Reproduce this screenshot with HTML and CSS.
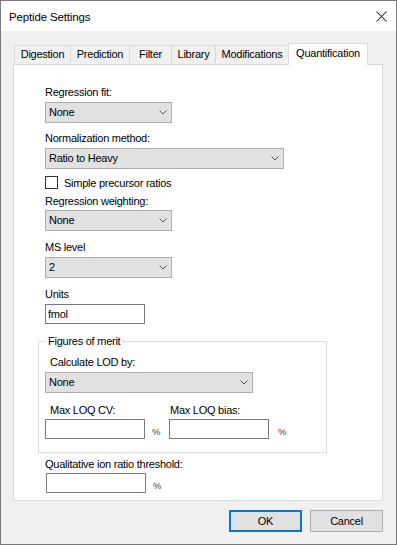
FILE: index.html
```html
<!DOCTYPE html>
<html>
<head>
<meta charset="utf-8">
<title>Peptide Settings</title>
<link rel="stylesheet" href="styles.css">
</head>
<body>
<div class="window">
  <div class="titlebar">
    <span class="title">Peptide Settings</span>
    <svg class="close" width="11" height="11" viewBox="0 0 11 11"><path d="M0.5 0.5 L10.5 10.5 M10.5 0.5 L0.5 10.5" stroke="#1a1a1a" stroke-width="1.05" fill="none"/></svg>
  </div>
  <div class="body">
    <div class="tabs">
      <div class="tab t-dig">Digestion</div>
      <div class="tab t-pred">Prediction</div>
      <div class="tab t-filt">Filter</div>
      <div class="tab t-lib">Library</div>
      <div class="tab t-mod">Modifications</div>
      <div class="tab active t-quant">Quantification</div>
    </div>
    <div class="panel">
      <div class="lbl">Regression fit:</div>
      <div class="combo w-sm mt2"><span>None</span><svg class="chev" width="8" height="5" viewBox="0 0 8 5"><polyline points="0.5,0.5 4,4 7.5,0.5" fill="none" stroke="#555" stroke-width="1"/></svg></div>

      <div class="lbl mt8">Normalization method:</div>
      <div class="combo w-lg mt2"><span>Ratio to Heavy</span><svg class="chev" width="8" height="5" viewBox="0 0 8 5"><polyline points="0.5,0.5 4,4 7.5,0.5" fill="none" stroke="#555" stroke-width="1"/></svg></div>

      <div class="check-row mt7"><span class="checkbox"></span><span>Simple precursor ratios</span></div>

      <div class="lbl mt5">Regression weighting:</div>
      <div class="combo w-sm mt1"><span>None</span><svg class="chev" width="8" height="5" viewBox="0 0 8 5"><polyline points="0.5,0.5 4,4 7.5,0.5" fill="none" stroke="#555" stroke-width="1"/></svg></div>

      <div class="lbl mt9">MS level</div>
      <div class="combo w-sm mt2"><span>2</span><svg class="chev" width="8" height="5" viewBox="0 0 8 5"><polyline points="0.5,0.5 4,4 7.5,0.5" fill="none" stroke="#555" stroke-width="1"/></svg></div>

      <div class="lbl mt9">Units</div>
      <div class="textbox mt2">fmol</div>

      <div class="group">
        <div class="legend">Figures of merit</div>
        <div class="lbl in mt6">Calculate LOD by:</div>
        <div class="combo w-md mt2"><span>None</span><svg class="chev" width="8" height="5" viewBox="0 0 8 5"><polyline points="0.5,0.5 4,4 7.5,0.5" fill="none" stroke="#555" stroke-width="1"/></svg></div>
        <div class="loq-row mt10">
          <div class="loq-col first">
            <div class="lbl in">Max LOQ CV:</div>
            <div class="input-row mt1"><div class="textbox"></div><span class="pct">%</span></div>
          </div>
          <div class="loq-col">
            <div class="lbl in1">Max LOQ bias:</div>
            <div class="input-row mt1"><div class="textbox"></div><span class="pct pct2">%</span></div>
          </div>
        </div>
      </div>

      <div class="lbl mt4">Qualitative ion ratio threshold:</div>
      <div class="input-row mt1 qual"><div class="textbox"></div><span class="pct">%</span></div>
    </div>
    <div class="buttons">
      <button class="btn default">OK</button>
      <button class="btn">Cancel</button>
    </div>
  </div>
</div>
</body>
</html>
```

FILE: styles.css
```css
* { box-sizing: border-box; }
html, body { margin: 0; padding: 0; background: #fff; }
body {
  font-family: "Liberation Sans", Arial, sans-serif;
  font-size: 11px;
  letter-spacing: -0.25px;
  color: #000;
}
.window {
  width: 397px;
  height: 545px;
  border: 1px solid #7a7a7a;
  background: #f0f0f0;
  display: flex;
  flex-direction: column;
}
.titlebar {
  height: 30px;
  flex: none;
  background: #fff;
  display: flex;
  align-items: center;
  justify-content: space-between;
  padding: 0 9px 0 8px;
}
.title { font-size: 11.5px; letter-spacing: -0.15px; padding-top: 1px; }
.close { display: block; margin-top: 1px; }

.body {
  flex: 1;
  display: flex;
  flex-direction: column;
  padding: 12px 13px 0 12px;
}
.tabs {
  display: flex;
  align-items: flex-end;
  height: 21px;
  padding-left: 1px;
}
.tab {
  height: 19px;
  line-height: 17px;
  border: 1px solid #d9d9d9;
  border-bottom: none;
  background: #f0f0f0;
  text-align: center;
  margin-left: -1px;
}
.tab:first-child { margin-left: 0; }
.tab.active {
  position: relative;
  z-index: 1;
  height: 22px;
  margin-bottom: -1px;
  background: #fff;
  line-height: 18px;
}
.t-dig { width: 57px; }
.t-pred { width: 60px; }
.t-filt { width: 43px; }
.t-lib { width: 45px; }
.t-mod { width: 74px; }
.t-quant { width: 80px; }

.panel {
  width: 370px;
  height: 437px;
  border: 1px solid #d9d9d9;
  background: #fff;
  padding: 20px 0 0 31px;
  display: flex;
  flex-direction: column;
  align-items: flex-start;
}
.lbl { height: 15px; line-height: 15px; white-space: nowrap; }
.lbl.in { margin-left: 5px; }
.lbl.in1 { margin-left: 1px; }

.mt1 { margin-top: 1px; }
.mt2 { margin-top: 2px; }
.mt4 { margin-top: 4px; }
.mt5 { margin-top: 5px; }
.mt6 { margin-top: 6px; }
.mt7 { margin-top: 7px; }
.mt8 { margin-top: 8px; }
.mt9 { margin-top: 9px; }
.mt10 { margin-top: 10px; }

.combo {
  height: 21px;
  background: #e1e1e1;
  border: 1px solid #adadad;
  display: flex;
  align-items: center;
  justify-content: space-between;
  padding: 0 4px 0 3px;
}
.combo span { line-height: 15px; }
.chev { display: block; margin-top: -1px; }
.w-sm { width: 127px; }
.w-lg { width: 239px; }
.w-md { width: 208px; }

.check-row {
  display: flex;
  align-items: center;
  height: 13px;
  gap: 6px;
}
.checkbox {
  width: 13px;
  height: 13px;
  border: 1px solid #333;
  background: #fff;
  flex: none;
}

.textbox {
  width: 100px;
  height: 20px;
  border: 1px solid #7a7a7a;
  background: #fff;
  padding: 0 2px;
  line-height: 18px;
  flex: none;
}

.group {
  margin-top: 17px;
  margin-left: -7px;
  width: 289px;
  border: 1px solid #dcdcdc;
  padding: 0 0 13px 6px;
  display: flex;
  flex-direction: column;
  align-items: flex-start;
}
.legend {
  margin-top: -8px;
  margin-left: 1px;
  padding: 0 2px;
  height: 15px;
  line-height: 15px;
  background: #fff;
}
.loq-row { display: flex; }
.loq-col { display: flex; flex-direction: column; align-items: flex-start; }
.loq-col.first { width: 124px; }

.input-row { display: flex; align-items: center; }
.pct {
  font-size: 9.5px;
  color: #444;
  margin-left: 7px;
  margin-top: 4px;
}
.pct2 { margin-left: 9px; }
.qual { margin-left: 1px; }

.buttons {
  display: flex;
  justify-content: flex-end;
  gap: 8px;
  margin-top: 9px;
}
.btn {
  width: 73px;
  height: 22px;
  background: #e1e1e1;
  border: 1px solid #adadad;
  font-family: inherit;
  font-size: 11px;
  letter-spacing: -0.25px;
  color: #000;
  padding: 0;
  margin: 0;
}
.btn.default { border: 2px solid #0078d7; }
```
